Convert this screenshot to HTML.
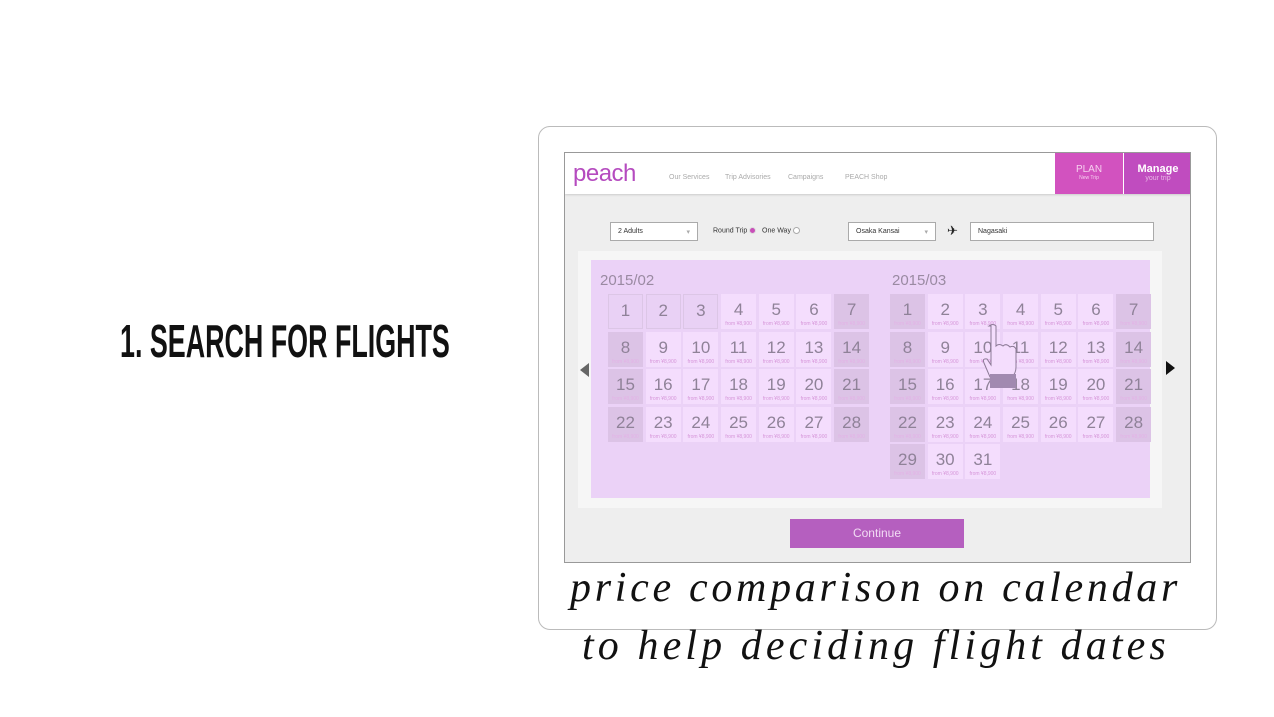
<!DOCTYPE html>
<html><head><meta charset="utf-8"><style>
*{margin:0;padding:0;box-sizing:border-box}
body{width:1274px;height:717px;background:#fff;position:relative;overflow:hidden;font-family:"Liberation Sans",sans-serif}
.abs{position:absolute}
.title{left:120px;top:314px;font-size:46px;font-weight:bold;color:#111;white-space:nowrap;transform:scaleX(0.584);transform-origin:left top;line-height:54px}
.tablet{left:538px;top:126px;width:679px;height:504px;border:1px solid #bbb;border-radius:12px;background:#fff}
.screen{left:564px;top:152px;width:627px;height:411px;border:1px solid #999;background:#eeeeee;overflow:hidden}
.nav{left:0;top:0;width:627px;height:41px;background:#fff;box-shadow:0 1px 2px #ccc}
.logo{left:8px;top:7px;font-size:24px;color:#b54bbf;letter-spacing:-0.5px}
.nl{top:21px;font-size:7px;color:#aaa}
.plan{left:490px;top:0;width:68px;height:41px;background:#d252bf;color:#f6d0ef;text-align:center;font-size:10px;padding-top:11px}
.man{left:559px;top:0;width:68px;height:41px;background:#c04cbf;color:#fff;text-align:center;font-size:11px;font-weight:bold;padding-top:10px}
.sel{background:#fff;border:1px solid #aaa;height:19px;font-size:7px;color:#333;padding:5px 7px}
.lite{left:13px;top:98px;width:584px;height:257px;background:#f6f6f6}
.cal{left:26px;top:107px;width:559px;height:238px;background:#ebd2f7}
.mon{font-size:15px;color:#9a8aa2;top:12px}
.grid{display:grid;grid-template-columns:repeat(7,35px);column-gap:2.7px;row-gap:2.5px;grid-auto-rows:35px;top:34px}
.grid div{background:#f4ddfd;text-align:center;color:#8f8298;font-size:17px;line-height:17px;padding-top:7px;position:relative}
.grid div i{display:block;font-style:normal;font-size:5px;line-height:5px;color:#d696d9;margin-top:4px}
.grid div.w{background:#dcc3e6}
.grid div.w i{color:#e3b2e6}
.grid div.u{background:#e9d1f5;border:1px solid #dcc6e6}
.btn{left:225px;top:366px;width:174px;height:29px;background:#b55fbf;color:#f2dcf4;font-size:12px;text-align:center;line-height:29px}
.cap{font-family:"Liberation Serif",serif;font-style:italic;font-size:42px;color:#111;white-space:nowrap}
</style></head><body>
<div class="abs title">1. SEARCH FOR FLIGHTS</div>
<div class="abs tablet"></div>
<div class="abs screen">
 <div class="abs nav">
  <div class="abs logo">peach</div>
  <div class="abs nl" style="left:104px">Our Services</div>
  <div class="abs nl" style="left:160px">Trip Advisories</div>
  <div class="abs nl" style="left:223px">Campaigns</div>
  <div class="abs nl" style="left:280px">PEACH Shop</div>
  <div class="abs plan">PLAN<div style="font-size:5px">New Trip</div></div>
  <div class="abs man">Manage<div style="font-size:7px;font-weight:normal;color:#e9b8e6">your trip</div></div>
 </div>
 <div class="abs sel" style="left:45px;top:69px;width:88px">2 Adults<span style="float:right;color:#aaa">▾</span></div>
 <div class="abs" style="left:148px;top:74px;font-size:7px;color:#333">Round Trip <span style="display:inline-block;width:7px;height:7px;border-radius:50%;background:#c84fb8;vertical-align:middle;border:1px solid #ddd"></span> &nbsp; One Way <span style="display:inline-block;width:7px;height:7px;border-radius:50%;background:#fff;border:1px solid #aaa;vertical-align:middle"></span></div>
 <div class="abs sel" style="left:283px;top:69px;width:88px">Osaka Kansai<span style="float:right;color:#aaa">▾</span></div>
 <div class="abs" style="left:382px;top:70px;font-size:13px;color:#222">✈</div>
 <div class="abs sel" style="left:405px;top:69px;width:184px">Nagasaki</div>
 <div class="abs lite"></div>
 <div class="abs" style="left:15px;top:210px;width:0;height:0;border-top:7px solid transparent;border-bottom:7px solid transparent;border-right:9px solid #666"></div>
 <div class="abs" style="left:601px;top:208px;width:0;height:0;border-top:7px solid transparent;border-bottom:7px solid transparent;border-left:9px solid #111"></div>
 <div class="abs cal">
  <div class="abs mon" style="left:9px">2015/02</div>
  <div class="abs grid" style="left:17px">
   <div class="u">1</div><div class="u">2</div><div class="u">3</div><div>4<i>from ¥8,900</i></div><div>5<i>from ¥8,900</i></div><div>6<i>from ¥8,900</i></div><div class="w">7<i>from ¥8,900</i></div>
   <div class="w">8<i>from ¥8,900</i></div><div>9<i>from ¥8,900</i></div><div>10<i>from ¥8,900</i></div><div>11<i>from ¥8,900</i></div><div>12<i>from ¥8,900</i></div><div>13<i>from ¥8,900</i></div><div class="w">14<i>from ¥8,900</i></div>
   <div class="w">15<i>from ¥8,900</i></div><div>16<i>from ¥8,900</i></div><div>17<i>from ¥8,900</i></div><div>18<i>from ¥8,900</i></div><div>19<i>from ¥8,900</i></div><div>20<i>from ¥8,900</i></div><div class="w">21<i>from ¥8,900</i></div>
   <div class="w">22<i>from ¥8,900</i></div><div>23<i>from ¥8,900</i></div><div>24<i>from ¥8,900</i></div><div>25<i>from ¥8,900</i></div><div>26<i>from ¥8,900</i></div><div>27<i>from ¥8,900</i></div><div class="w">28<i>from ¥8,900</i></div>
  </div>
  <div class="abs mon" style="left:301px">2015/03</div>
  <div class="abs grid" style="left:299px">
   <div class="w">1<i>from ¥8,900</i></div><div>2<i>from ¥8,900</i></div><div>3<i>from ¥8,900</i></div><div>4<i>from ¥8,900</i></div><div>5<i>from ¥8,900</i></div><div>6<i>from ¥8,900</i></div><div class="w">7<i>from ¥8,900</i></div>
   <div class="w">8<i>from ¥8,900</i></div><div>9<i>from ¥8,900</i></div><div>10<i>from ¥8,900</i></div><div>11<i>from ¥8,900</i></div><div>12<i>from ¥8,900</i></div><div>13<i>from ¥8,900</i></div><div class="w">14<i>from ¥8,900</i></div>
   <div class="w">15<i>from ¥8,900</i></div><div>16<i>from ¥8,900</i></div><div>17<i>from ¥8,900</i></div><div>18<i>from ¥8,900</i></div><div>19<i>from ¥8,900</i></div><div>20<i>from ¥8,900</i></div><div class="w">21<i>from ¥8,900</i></div>
   <div class="w">22<i>from ¥8,900</i></div><div>23<i>from ¥8,900</i></div><div>24<i>from ¥8,900</i></div><div>25<i>from ¥8,900</i></div><div>26<i>from ¥8,900</i></div><div>27<i>from ¥8,900</i></div><div class="w">28<i>from ¥8,900</i></div>
   <div class="w">29<i>from ¥8,900</i></div><div>30<i>from ¥8,900</i></div><div>31<i>from ¥8,900</i></div>
  </div>
  <svg class="abs" style="left:388px;top:62px" width="45" height="70" viewBox="0 0 45 70">
   <path d="M10 4 q4-3 7 0 v20 q3-3 7 0 q3-3 7 1 q4-2 6 2 v18 q0 6-4 10 h-22 l-6-14 q-2-5 3-4 l4 6 v-39z" fill="#f4ddfd" stroke="#8c7a96" stroke-width="1"/>
   <rect x="11" y="52" width="26" height="14" fill="#a18ab0"/>
  </svg>
 </div>
 <div class="abs btn">Continue</div>
</div>
<div class="abs cap" style="left:570px;top:564px;letter-spacing:3.7px">price comparison on calendar</div>
<div class="abs cap" style="left:582px;top:622px;letter-spacing:4.1px">to help deciding flight dates</div>
</body></html>
